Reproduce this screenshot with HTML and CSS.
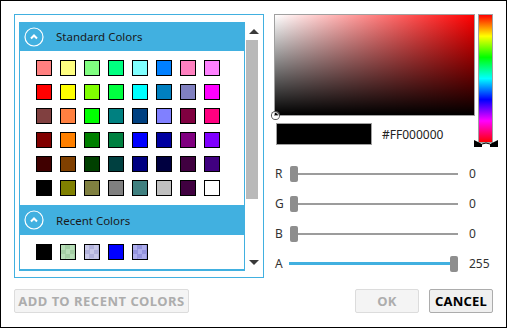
FILE: index.html
```html
<!DOCTYPE html>
<html lang="en">
<head>
<meta charset="UTF-8">
<title>Color Picker</title>
<link rel="stylesheet" href="styles.css">
</head>
<body>
    <div class="dialog">
        <div class="main">
            <div class="palette-panel">
                <div class="palette-list">
                    <div class="group-header">
                        <svg class="toggle" width="20" height="20" viewBox="0 0 20 20">
                            <circle cx="10" cy="10" r="9" fill="none" stroke="#fff" stroke-width="1.2"/>
                            <polyline points="7,11.5 10,8.5 13,11.5" fill="none" stroke="#fff" stroke-width="2"/>
                        </svg>
                        <span>Standard Colors</span>
                    </div>
                    <div class="swatches">
                        <span class="swatch" style="background:#ff8080"></span>
                        <span class="swatch" style="background:#ffff80"></span>
                        <span class="swatch" style="background:#80ff80"></span>
                        <span class="swatch" style="background:#00ff80"></span>
                        <span class="swatch" style="background:#80ffff"></span>
                        <span class="swatch" style="background:#0080ff"></span>
                        <span class="swatch" style="background:#ff80c0"></span>
                        <span class="swatch" style="background:#ff80ff"></span>

                        <span class="swatch" style="background:#ff0000"></span>
                        <span class="swatch" style="background:#ffff00"></span>
                        <span class="swatch" style="background:#80ff00"></span>
                        <span class="swatch" style="background:#00ff40"></span>
                        <span class="swatch" style="background:#00ffff"></span>
                        <span class="swatch" style="background:#0080c0"></span>
                        <span class="swatch" style="background:#8080c0"></span>
                        <span class="swatch" style="background:#ff00ff"></span>

                        <span class="swatch" style="background:#804040"></span>
                        <span class="swatch" style="background:#ff8040"></span>
                        <span class="swatch" style="background:#00ff00"></span>
                        <span class="swatch" style="background:#008080"></span>
                        <span class="swatch" style="background:#004080"></span>
                        <span class="swatch" style="background:#8080ff"></span>
                        <span class="swatch" style="background:#800040"></span>
                        <span class="swatch" style="background:#ff0080"></span>

                        <span class="swatch" style="background:#800000"></span>
                        <span class="swatch" style="background:#ff8000"></span>
                        <span class="swatch" style="background:#008000"></span>
                        <span class="swatch" style="background:#008040"></span>
                        <span class="swatch" style="background:#0000ff"></span>
                        <span class="swatch" style="background:#0000a0"></span>
                        <span class="swatch" style="background:#800080"></span>
                        <span class="swatch" style="background:#8000ff"></span>

                        <span class="swatch" style="background:#400000"></span>
                        <span class="swatch" style="background:#804000"></span>
                        <span class="swatch" style="background:#004000"></span>
                        <span class="swatch" style="background:#004040"></span>
                        <span class="swatch" style="background:#000080"></span>
                        <span class="swatch" style="background:#000040"></span>
                        <span class="swatch" style="background:#400040"></span>
                        <span class="swatch" style="background:#400080"></span>

                        <span class="swatch" style="background:#000000"></span>
                        <span class="swatch" style="background:#808000"></span>
                        <span class="swatch" style="background:#808040"></span>
                        <span class="swatch" style="background:#808080"></span>
                        <span class="swatch" style="background:#408080"></span>
                        <span class="swatch" style="background:#c0c0c0"></span>
                        <span class="swatch" style="background:#400040"></span>
                        <span class="swatch" style="background:#ffffff"></span>
                    </div>

                    <div class="group-header recent-header">
                        <svg class="toggle" width="20" height="20" viewBox="0 0 20 20">
                            <circle cx="10" cy="10" r="9" fill="none" stroke="#fff" stroke-width="1.2"/>
                            <polyline points="7,11.5 10,8.5 13,11.5" fill="none" stroke="#fff" stroke-width="2"/>
                        </svg>
                        <span>Recent Colors</span>
                    </div>
                    <div class="swatches recent">
                        <span class="swatch" style="background:#000000"></span>
                        <span class="swatch green"></span>
                        <span class="swatch lavender"></span>
                        <span class="swatch" style="background:#0000ff"></span>
                        <span class="swatch violet"></span>
                    </div>
                </div>

                <div class="scrollbar">
                    <div class="arrow-box"><span class="arrow up"></span></div>
                    <div class="thumb"></div>
                    <div class="track"></div>
                    <div class="arrow-box"><span class="arrow down"></span></div>
                </div>
            </div>

            <div class="editor">
                <div class="picker">
                    <div class="picker-left">
                        <div class="sv-box">
                            <span class="sv-handle"></span>
                        </div>
                        <div class="preview-row">
                            <div class="preview"></div>
                            <span class="hex">#FF000000</span>
                        </div>
                    </div>
                    <div class="hue-bar">
                        <svg class="hue-marker" width="24" height="9" viewBox="0 0 24 9">
                            <polygon points="0,1 8,5 8,8 0,8" fill="#000"/>
                            <polygon points="24,1 16,5 16,8 24,8" fill="#000"/>
                            <path d="M8,5 Q12,3 16,5" fill="none" stroke="#000" stroke-width="1"/>
                        </svg>
                    </div>
                </div>

                <div class="channels">
                    <div class="channel">
                        <label>R</label>
                        <div class="slider"><span class="knob"></span><span class="rail"></span></div>
                        <span class="value">0</span>
                    </div>
                    <div class="channel">
                        <label>G</label>
                        <div class="slider"><span class="knob"></span><span class="rail"></span></div>
                        <span class="value">0</span>
                    </div>
                    <div class="channel">
                        <label>B</label>
                        <div class="slider"><span class="knob"></span><span class="rail"></span></div>
                        <span class="value">0</span>
                    </div>
                    <div class="channel">
                        <label>A</label>
                        <div class="slider"><span class="rail filled"></span><span class="knob"></span></div>
                        <span class="value">255</span>
                    </div>
                </div>
            </div>
        </div>

        <div class="actions">
            <button class="btn wide" disabled>ADD TO RECENT COLORS</button>
            <span class="spacer"></span>
            <button class="btn" disabled>OK</button>
            <button class="btn">CANCEL</button>
        </div>
    </div>
</body>
</html>
```

FILE: styles.css
```css
body {
    margin: 0;
    background: white;
    font-family: "Noto Sans", "Open Sans", sans-serif;
    font-size: 12px;
    color: #222;
}

.dialog {
    box-sizing: border-box;
    width: 507px;
    height: 328px;
    border: 1px solid #000;
    padding: 13px;
    display: flex;
    flex-direction: column;
}

.main {
    display: flex;
    gap: 10px;
}

/* left: palette */

.palette-panel {
    box-sizing: border-box;
    width: 250px;
    height: 264px;
    border: 1px solid #41b0e0;
    padding: 7px 0 6px 4px;
    display: flex;
}

.palette-list {
    box-sizing: border-box;
    width: 226px;
    border: 1px solid #41b0e0;
    border-top: none;
    border-bottom-width: 2px;
    overflow: hidden;
}

.group-header {
    height: 29px;
    background: #41b0e0;
    display: flex;
    align-items: center;
    color: #1a1a1a;
    font-size: 11.5px;
}

.recent-header {
    height: 30px;
}

.toggle {
    margin-left: 4px;
    margin-right: 12px;
}

.swatches {
    display: grid;
    grid-template-columns: repeat(8, 16px);
    gap: 8px;
    padding: 9px 0 9px 16px;
}

.swatch {
    box-sizing: border-box;
    width: 16px;
    height: 16px;
    border: 1px solid #000;
}

.green {
    background-image: repeating-conic-gradient(#a4cea4 0 25%, #b8deb8 0 50%);
    background-size: 9px 9px;
}

.lavender {
    background-image: repeating-conic-gradient(#b2b2dc 0 25%, #c8c8e8 0 50%);
    background-size: 9px 9px;
}

.violet {
    background-image: repeating-conic-gradient(#9494de 0 25%, #adadec 0 50%);
    background-size: 9px 9px;
}

.scrollbar {
    width: 17px;
    display: flex;
    flex-direction: column;
}

.arrow-box {
    height: 18px;
    display: flex;
    align-items: center;
    justify-content: center;
}

.arrow {
    width: 0;
    height: 0;
    border-left: 5px solid transparent;
    border-right: 5px solid transparent;
}

.arrow.up {
    border-bottom: 5px solid #3a3a3a;
}

.arrow.down {
    border-top: 5px solid #3a3a3a;
}

.thumb {
    width: 12px;
    height: 159px;
    margin-left: 1px;
    background: #b9b9b9;
}

.track {
    flex: 1;
}

/* right: editor */

.editor {
    width: 219px;
    display: flex;
    flex-direction: column;
}

.picker {
    display: flex;
    gap: 3px;
}

.picker-left {
    width: 201px;
}

.sv-box {
    position: relative;
    box-sizing: border-box;
    height: 102px;
    border: 1px solid #a0a0a0;
    background:
        linear-gradient(to top, #000, rgba(0, 0, 0, 0)),
        linear-gradient(to right, #fff, #f00);
}

.sv-handle {
    position: absolute;
    left: -3px;
    bottom: -4px;
    width: 5px;
    height: 5px;
    border-radius: 50%;
    border: 1px solid #fff;
    box-shadow: 0 0 0 1px #555;
}

.preview-row {
    margin-top: 7px;
    display: flex;
    align-items: center;
}

.preview {
    box-sizing: border-box;
    width: 96px;
    height: 22px;
    margin-left: 2px;
    background: #000;
    border: 1px solid #a0a0a0;
}

.hex {
    margin-left: 10px;
}

.hue-bar {
    position: relative;
    box-sizing: border-box;
    width: 15px;
    height: 129px;
    border: 1px solid #a0a0a0;
    background: linear-gradient(to bottom, #f00, #ff0, #0f0, #0ff, #00f, #f0f, #f00);
}

.hue-marker {
    position: absolute;
    left: -5px;
    bottom: -6px;
}

.channels {
    margin-top: 20px;
    display: flex;
    flex-direction: column;
    gap: 14px;
}

.channel {
    display: grid;
    grid-template-columns: 16px 168px auto;
    align-items: center;
    height: 16px;
}

.channel label {
    padding-left: 1px;
    color: #333;
}

.slider {
    display: flex;
    align-items: center;
}

.knob {
    width: 8px;
    height: 16px;
    border-radius: 2px;
    background: #8e8e8e;
}

.rail {
    flex: 1;
    height: 2px;
    background: #9c9c9c;
}

.rail.filled {
    height: 3px;
    background: #41b0e0;
    margin-left: -1px;
}

.value {
    padding-left: 11px;
    color: #333;
}

/* bottom buttons */

.actions {
    margin-top: 11px;
    display: flex;
    gap: 10px;
}

.spacer {
    flex: 1;
}

.btn {
    box-sizing: border-box;
    height: 24px;
    width: 64px;
    padding: 0;
    font-family: "Noto Sans", "Open Sans", sans-serif;
    font-size: 13px;
    letter-spacing: 0.2px;
    font-weight: bold;
    color: #000;
    background: #f0f0f0;
    border: 1px solid #acacac;
    border-radius: 2px;
}

.btn:disabled {
    color: #adadad;
    background: #f4f4f4;
    border-color: #dcdcdc;
}

.btn.wide {
    width: 175px;
    letter-spacing: 0.5px;
}
```
